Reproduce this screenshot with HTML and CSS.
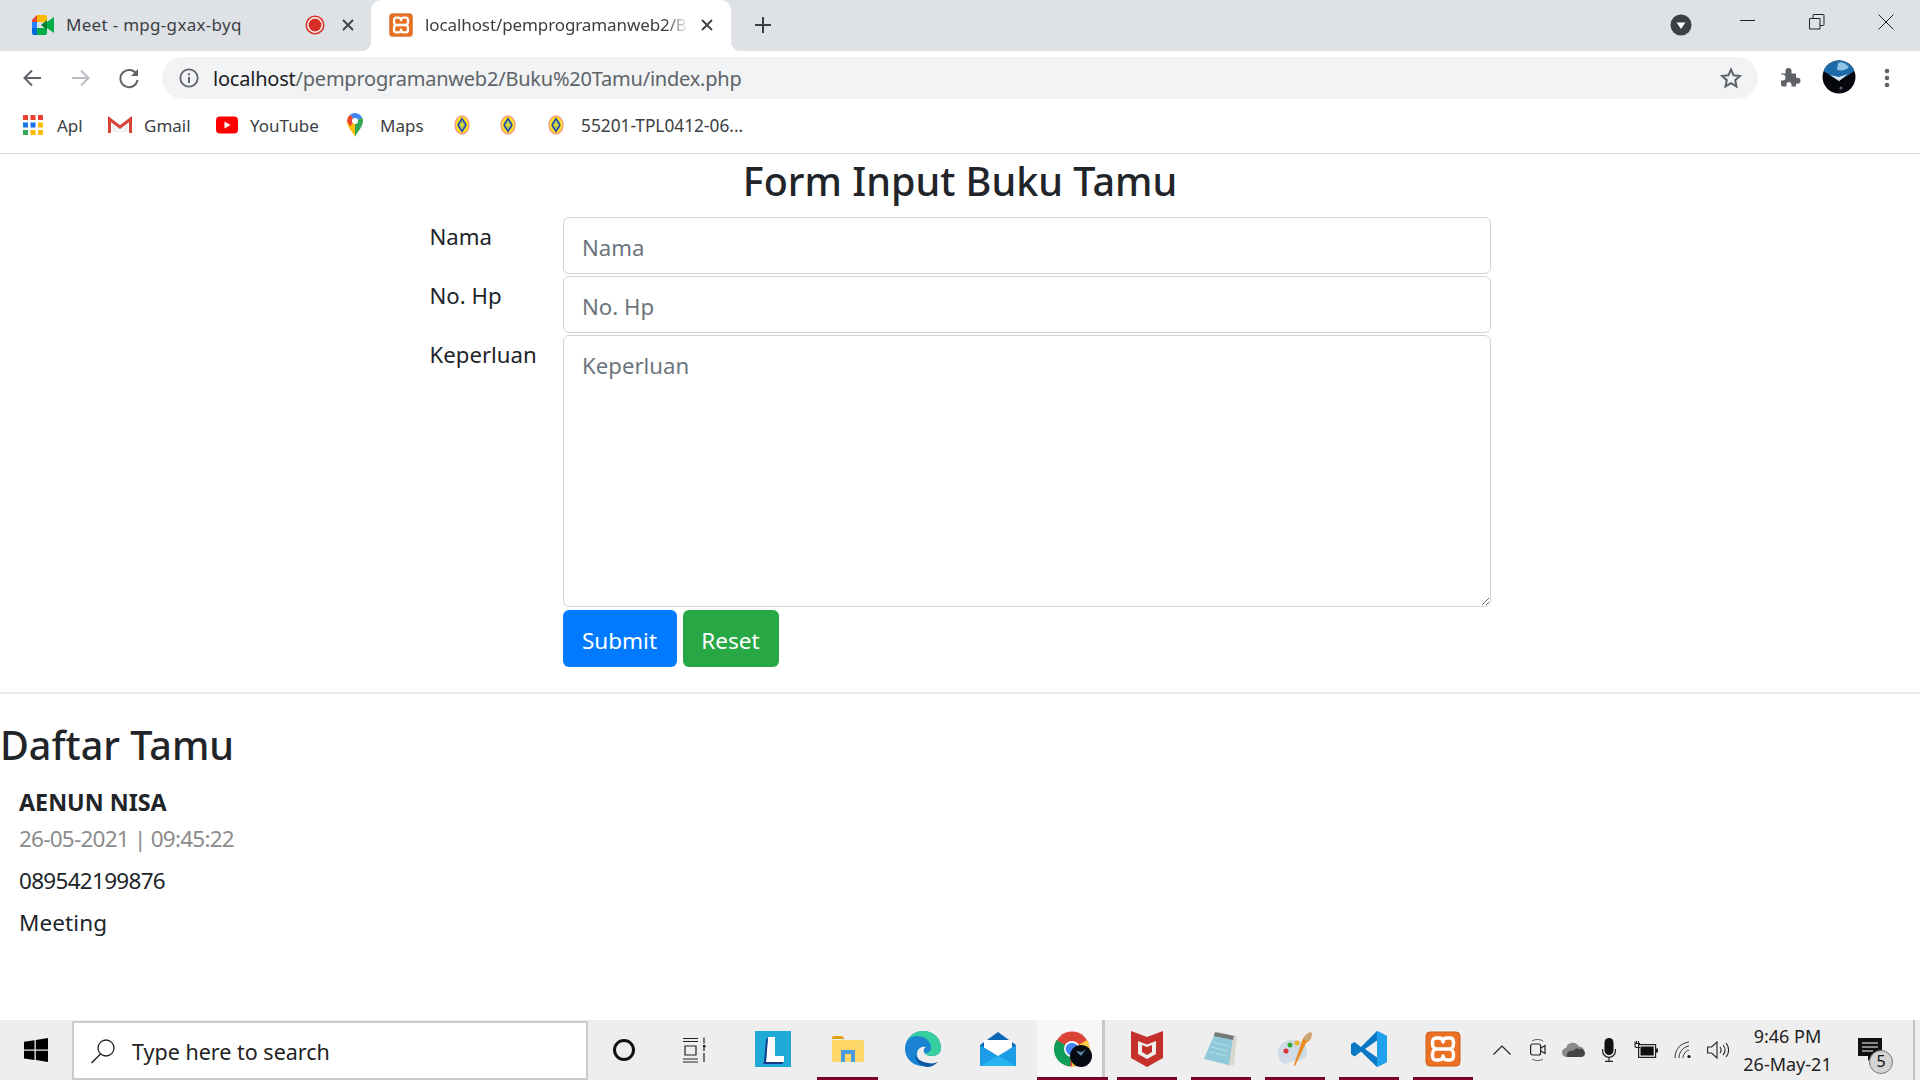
FILE: index.html
```html
<!DOCTYPE html>
<html lang="id">
<head>
<meta charset="utf-8">
<title>Form Input Buku Tamu</title>
<link rel="stylesheet" href="styles.css">
</head>
<body>
<svg class="defs" width="0" height="0" aria-hidden="true">
  <defs>
    <symbol id="xampp" viewBox="0 0 36 36">
      <rect x="1" y="1" width="34" height="34" rx="4" fill="#ea7024"/>
      <rect x="1" y="1" width="34" height="34" rx="4" fill="none" stroke="#c9601c" stroke-width="1"/>
      <path d="M18 11C18 8 16 7 14 7H11C8.500 7 7.500 9 7.500 11V13C7.500 16 9.500 18 12 18 9.500 18 7.500 20 7.500 23V25C7.500 27 8.500 29 11 29H14C16 29 18 28 18 25 18 28 20 29 22 29H25C27.500 29 28.500 27 28.500 25V23C28.500 20 26.500 18 24 18 26.500 18 28.500 16 28.500 13V11C28.500 9 27.500 7 25 7H22C20 7 18 8 18 11ZM12 18H24" fill="none" stroke="#fff" stroke-width="3.400" stroke-linejoin="round"/>
    </symbol>
    <symbol id="badge" viewBox="0 0 16 20">
      <ellipse cx="8" cy="10" rx="7.700" ry="9.700" fill="#f49a8a"/>
      <ellipse cx="8" cy="10" rx="6.300" ry="8.200" fill="#ffe21a"/>
      <ellipse cx="8" cy="10" rx="4.400" ry="5.800" fill="#9cc25a"/>
      <path d="M8 3.500l4 6.500-4 6.500L4 10z" fill="none" stroke="#1b2fc4" stroke-width="1.300"/>
      <circle cx="8" cy="10" r="1.400" fill="#ffe21a"/>
    </symbol>
  </defs>
</svg>

<header class="chrome">
  <div class="tabstrip">
    <div class="tab tab-meet">
      <svg class="fav-meet" viewBox="0 0 24 20" width="24" height="20">
        <path d="M1 5l5-5v7H1z" fill="#ea4335"/>
        <path d="M1 7h5v6H1z" fill="#2684fc"/>
        <path d="M1 13h5v7H3a2 2 0 0 1-2-2z" fill="#0066da"/>
        <path d="M6 0h8a2 2 0 0 1 2 2v5H6z" fill="#ffba00"/>
        <path d="M6 13h10v5a2 2 0 0 1-2 2H6z" fill="#00ac47"/>
        <path d="M10 10l6-5v10z" fill="#00832d"/>
        <path d="M16 7l7-5v16l-7-5z" fill="#00ac47"/>
      </svg>
      <span class="tab-title">Meet - mpg-gxax-byq</span>
      <svg class="rec" viewBox="0 0 20 20" width="20" height="20">
        <circle cx="10" cy="10" r="8.700" fill="#fff" stroke="#d93025" stroke-width="1.600"/>
        <circle cx="10" cy="10" r="6.500" fill="#d93025"/>
      </svg>
      <svg class="tab-x" viewBox="0 0 12 12" width="12" height="12"><path d="M1 1l10 10M11 1L1 11" stroke="#3c4043" stroke-width="1.800"/></svg>
    </div>
    <div class="tab tab-active">
      <svg class="fav-x" width="24" height="24"><use href="#xampp"/></svg>
      <span class="tab-title tab-clip">localhost/pemprogramanweb2/Buku%20Tamu/index.php</span>
      <svg class="tab-x" viewBox="0 0 12 12" width="12" height="12"><path d="M1 1l10 10M11 1L1 11" stroke="#3c4043" stroke-width="1.800"/></svg>
    </div>
    <svg class="newtab" viewBox="0 0 18 18" width="18" height="18"><path d="M9 1v16M1 9h16" stroke="#3c4043" stroke-width="2"/></svg>
    <div class="strip-fill"></div>
    <svg class="tabsearch" viewBox="0 0 22 22" width="22" height="22"><circle cx="11" cy="11" r="10.500" fill="#3c4043"/><path d="M6.500 8.500h9L11 15z" fill="#fff"/></svg>
    <div class="winctl">
      <svg viewBox="0 0 16 16" width="16" height="16"><path d="M0 6.500h15" stroke="#222" stroke-width="1"/></svg>
      <svg viewBox="0 0 16 16" width="16" height="16"><path d="M.5 4.500h10.500v10.500H.5zM4 4.500V1.200a.7.7 0 0 1 .7-.7h9.600a.7.7 0 0 1 .7.7v9.600a.7.7 0 0 1-.7.7H11" fill="none" stroke="#222" stroke-width="1"/></svg>
      <svg viewBox="0 0 16 16" width="16" height="16"><path d="M.5.500l15 15M15.500.500l-15 15" stroke="#222" stroke-width="1"/></svg>
    </div>
  </div>

  <div class="toolbar">
    <svg class="nav nav-back" viewBox="0 0 20 20" width="20" height="20"><path d="M19 10H3M10 2.500L2.500 10l7.500 7.500" fill="none" stroke="#5f6368" stroke-width="2"/></svg>
    <svg class="nav nav-fwd" viewBox="0 0 20 20" width="20" height="20"><path d="M1 10h16M10 2.500l7.500 7.500-7.500 7.500" fill="none" stroke="#b9bcc0" stroke-width="2"/></svg>
    <svg class="nav nav-reload" viewBox="0 0 22 22" width="22" height="22"><path d="M18.600 7.500A8.600 8.600 0 1 0 19.500 13" fill="none" stroke="#5f6368" stroke-width="2"/><path d="M20 2v7h-7z" fill="#5f6368"/></svg>
    <div class="omnibox">
      <svg class="info" viewBox="0 0 20 20" width="20" height="20"><circle cx="10" cy="10" r="8.700" fill="none" stroke="#5f6368" stroke-width="1.800"/><path d="M9 9h2v6H9zM9 5.200h2v2H9z" fill="#5f6368"/></svg>
      <span class="url"><span class="url-host">localhost</span>/pemprogramanweb2/Buku%20Tamu/index.php</span>
      <svg class="star" viewBox="0 0 22 22" width="22" height="22"><path d="M11 2.500l2.600 5.800 6.300.7-4.700 4.200 1.300 6.200-5.500-3.200-5.500 3.200 1.300-6.200L2.100 9l6.300-.7z" fill="none" stroke="#5f6368" stroke-width="2"/></svg>
    </div>
    <svg class="puzzle" viewBox="0 0 22 22" width="22" height="22"><path d="M1 8h4.500V5.500a3 3 0 0 1 6 0V8H16v4.300h1.500a3 3 0 0 1 0 6H16V21h-4.500v-2a2.500 2.500 0 0 0-5 0v2H3a2 2 0 0 1-2-2v-4h1.500a3 3 0 0 0 0-6H1z" fill="#5f6368" transform="translate(0 -1.500)"/></svg>
    <svg class="avatar" viewBox="0 0 34 34" width="34" height="34">
      <defs><clipPath id="avc"><circle cx="17" cy="17" r="16.500"/></clipPath></defs>
      <g clip-path="url(#avc)">
        <rect width="34" height="34" fill="#05070c"/>
        <path d="M0 0h34v10L17 21 0 10z" fill="#1c6aa8"/>
        <path d="M16 3c5-2 8 1 11 4-3 3-7 4-12 3z" fill="#8fc3e6"/>
        <path d="M17 21l-9-6 9 2 9-3z" fill="#d5e6f2"/>
        <circle cx="19" cy="28" r="1.500" fill="#667"/>
      </g>
    </svg>
    <svg class="menu" viewBox="0 0 6 20" width="6" height="20"><circle cx="3" cy="3" r="2.300" fill="#5f6368"/><circle cx="3" cy="10" r="2.300" fill="#5f6368"/><circle cx="3" cy="17" r="2.300" fill="#5f6368"/></svg>
  </div>

  <nav class="bookmarks">
    <a class="bm bm-apl">
      <svg viewBox="0 0 20 20" width="20" height="20">
        <g fill="#ea4335"><rect x="0" y="0" width="5" height="5"/><rect x="7.500" y="0" width="5" height="5"/><rect x="15" y="0" width="5" height="5"/></g>
        <g fill="#1a73e8"><rect x="0" y="7.500" width="5" height="5"/><rect x="7.500" y="7.500" width="5" height="5"/></g>
        <rect x="15" y="7.500" width="5" height="5" fill="#fbbc04"/>
        <rect x="0" y="15" width="5" height="5" fill="#34a853"/>
        <g fill="#fbbc04"><rect x="7.500" y="15" width="5" height="5"/><rect x="15" y="15" width="5" height="5"/></g>
      </svg>
      <span>Apl</span>
    </a>
    <a class="bm bm-gmail">
      <svg viewBox="0 0 24 18" width="24" height="18"><path d="M4 16V6l8 6 8-6v10" fill="#f1f1f1"/><path d="M1.500 17V3l10.500 8 10.500-8v14" fill="none" stroke="#d8433a" stroke-width="3"/></svg>
      <span>Gmail</span>
    </a>
    <a class="bm bm-yt">
      <svg viewBox="0 0 22 18" width="22" height="18"><rect width="22" height="17" y=".5" rx="4" fill="#ff0000"/><path d="M8.500 5.500v7l6-3.500z" fill="#fff"/></svg>
      <span>YouTube</span>
    </a>
    <a class="bm bm-maps">
      <svg viewBox="0 0 16 24" width="16" height="24">
        <path d="M8 24C6 19 0 14 0 8a8 8 0 0 1 3-6.200l5 6.200z" fill="#fbbc04"/>
        <path d="M8 24c2-5 8-10 8-16a8 8 0 0 0-.8-3.500L8 8z" fill="#34a853"/>
        <path d="M3 1.800A8 8 0 0 1 15.200 4.500L8 8z" fill="#4285f4"/>
        <path d="M0 8a8 8 0 0 1 3-6.200L8 8 3 13z" fill="#ea4335"/>
        <circle cx="8" cy="8" r="3" fill="#fff"/>
      </svg>
      <span>Maps</span>
    </a>
    <svg class="bm-badge badge-1" width="16" height="20"><use href="#badge"/></svg>
    <svg class="bm-badge badge-2" width="16" height="20"><use href="#badge"/></svg>
    <a class="bm bm-last">
      <svg width="16" height="20"><use href="#badge"/></svg>
      <span>55201-TPL0412-06...</span>
    </a>
  </nav>
</header>

<main class="page">
  <h3 class="form-title">Form Input Buku Tamu</h3>
  <form class="guest-form">
    <label class="field-label" for="nama">Nama</label>
    <input class="field" id="nama" type="text" placeholder="Nama">
    <label class="field-label" for="hp">No. Hp</label>
    <input class="field" id="hp" type="text" placeholder="No. Hp">
    <label class="field-label" for="perlu">Keperluan</label>
    <textarea class="field field-area" id="perlu" placeholder="Keperluan"></textarea>
    <div class="actions">
      <button class="btn btn-blue" type="button">Submit</button>
      <button class="btn btn-green" type="button">Reset</button>
    </div>
  </form>
  <hr class="rule">
  <h3 class="list-title">Daftar Tamu</h3>
  <article class="guest">
    <h5 class="guest-name">AENUN NISA</h5>
    <p class="guest-time">26-05-2021 | 09:45:22</p>
    <p class="guest-line guest-phone">089542199876</p>
    <p class="guest-line">Meeting</p>
  </article>
</main>

<footer class="taskbar">
  <div class="slot slot-start">
    <svg viewBox="0 0 24 24" width="24" height="24"><path d="M0 3.700l10.500-1.500v9.300H0zM11.800 2l12.200-2v11.500H11.800zM0 12.800h10.500v9.300L0 20.500zM11.800 12.800H24V24l-12.200-2z" fill="#000"/></svg>
  </div>
  <div class="search">
    <svg viewBox="0 0 26 26" width="26" height="26"><circle cx="16" cy="10" r="8" fill="none" stroke="#222" stroke-width="1.300"/><path d="M10.500 16L1.500 25" stroke="#222" stroke-width="1.400"/></svg>
    <span class="search-text">Type here to search</span>
  </div>
  <div class="slot slot-cortana">
    <svg viewBox="0 0 24 24" width="24" height="24"><circle cx="12" cy="12" r="9.500" fill="none" stroke="#111" stroke-width="3"/></svg>
  </div>
  <div class="slot slot-task">
    <svg viewBox="0 0 26 26" width="26" height="26"><path d="M1 1.500h15M1 4.500h15M3 9h11v9H3zM1 22h15M1 25h15M22 .5v6M22 10.500v3.500M22 16v9" fill="none" stroke="#222" stroke-width="1.200"/><rect x="21" y="8" width="2.500" height="2.500" fill="#222"/></svg>
  </div>
  <div class="pinned pinned-a">
    <div class="slot-app">
      <svg viewBox="0 0 36 36" width="36" height="36"><rect width="36" height="36" fill="#1fa9d6"/><path d="M13 6h7v19h9v6H11z" fill="#fff"/><path d="M11 9l2-3-2 25h-2z M9 31h20l-2 2H8z" fill="#153a86"/></svg>
    </div>
    <div class="slot-app is-open">
      <svg viewBox="0 0 32 26" width="32" height="26"><path d="M0 2a2 2 0 0 1 2-2h8l3 3h-13z" fill="#e0a30f"/><path d="M0 4h30a2 2 0 0 1 2 2v18a2 2 0 0 1-2 2H2a2 2 0 0 1-2-2z" fill="#fcd768"/><path d="M9 14h14v12h-4v-8h-6v8H9z" fill="#4a9ce0"/></svg>
    </div>
    <div class="slot-app">
      <svg viewBox="0 0 36 36" width="36" height="36"><path d="M18 0c10 0 18 7 18 17 0 5-4 8-9 8-3 0-7-1-8-4-1-2 0-4 2-5-5-1-9 2-9 7 0 6 5 11 12 12C10 37 0 29 0 18 0 8 8 0 18 0z" fill="#1b84d2"/><path d="M18 0c10 0 18 7 18 17 0 5-4 8-9 8-3 0-6-1-7-3 5 0 6-3 6-5 0-7-6-12-14-12-4 0-8 2-10 6C5 4 11 0 18 0z" fill="#36cfa0"/><path d="M10 24c0 6 5 11 12 12 4 0 8-2 11-5-3 1-6 2-10 1-7-1-10-4-13-8z" fill="#0c59a4"/></svg>
    </div>
    <div class="slot-app">
      <svg viewBox="0 0 36 34" width="36" height="34"><path d="M0 13L18 0l18 13v19a2 2 0 0 1-2 2H2a2 2 0 0 1-2-2z" fill="#0c65b5"/><path d="M4 8h28v10L18 26 4 18z" fill="#fff"/><path d="M0 13l18 11 18-11v21H0z" fill="#1c9be6"/><path d="M0 34l18-10 18 10z" fill="#28b4f0"/></svg>
    </div>
  </div>
  <div class="slot-app slot-chrome is-open">
    <svg viewBox="0 0 38 36" width="38" height="36">
      <circle cx="18" cy="18" r="17.500" fill="#db4437"/>
      <path d="M18 18L33 9a17.500 17.500 0 0 1-15 26.500z" fill="#ffcd40"/>
      <path d="M18 18l-2 17.500A17.500 17.500 0 0 1 2.500 9z" fill="#0f9d58"/>
      <circle cx="18" cy="18" r="8" fill="#fff"/>
      <circle cx="18" cy="18" r="6.300" fill="#4285f4"/>
      <circle cx="27" cy="25" r="11" fill="#060a12"/>
      <path d="M22 20l5 5 5-7-4 3z" fill="#5d86a8"/>
    </svg>
  </div>
  <div class="pinned pinned-b">
    <div class="slot-app is-open">
      <svg viewBox="0 0 32 36" width="32" height="36"><path d="M0 0l16 6 16-6v27L16 36 0 27z" fill="#c5302b"/><path d="M7 10l9 3.500L25 10v13l-9 5-9-5z" fill="#eee"/><path d="M11 14l5 2 5-2v7l-5 3-5-3z" fill="#c5302b"/></svg>
    </div>
    <div class="slot-app is-open">
      <svg viewBox="0 0 34 36" width="34" height="36"><path d="M15 1l18 4-3 29-8 1z" fill="#d8d8d0"/><path d="M11 2l18 4-4 28-25-6z" fill="#8fc8d8"/><path d="M11 1l19 4-1 4L10 5z" fill="#777"/><path d="M9 11l16 4M7 16l17 4M5 21l18 4" stroke="#b5dde8" stroke-width="1"/></svg>
    </div>
    <div class="slot-app is-open">
      <svg viewBox="0 0 36 36" width="36" height="36"><path d="M1 22C1 13 9 8 18 9c8 1 13 6 12 13-1 6-8 9-14 8-4 0-4 3-8 3-4-1-7-5-7-11z" fill="#cfdbe6"/><circle cx="9" cy="20" r="2.500" fill="#d33"/><circle cx="13" cy="14" r="2.500" fill="#3a3"/><circle cx="20" cy="12" r="2.500" fill="#e9b41f"/><path d="M34 1c2 5-1 9-5 11L18 35l-1-1 8-24c1-4 5-8 9-9z" fill="#e88a1e"/><path d="M34 1c2 4-1 8-4 9l-4-2c1-3 5-6 8-7z" fill="#c9a878"/></svg>
    </div>
    <div class="slot-app is-open">
      <svg viewBox="0 0 36 36" width="36" height="36"><path d="M26 0l10 5v26l-10 5-16-15.500-6.500 5L0 23V13l3.500-2 6.500 5z" fill="#0b78c5"/><path d="M26 0l10 5v26l-10 5z" fill="#22a2ee"/><path d="M26 9.500L14 18l12 8.500z" fill="#eeeeee"/></svg>
    </div>
    <div class="slot-app is-open">
      <svg width="36" height="36"><use href="#xampp"/></svg>
    </div>
  </div>
  <div class="tray">
    <div class="tray-item w32"><svg viewBox="0 0 18 10" width="18" height="10"><path d="M.5 9.500L9 1l8.500 8.500" fill="none" stroke="#222" stroke-width="1.200"/></svg></div>
    <div class="tray-item w40"><svg viewBox="0 0 16 24" width="16" height="24"><rect x=".6" y="6" width="10" height="11" rx="2" fill="none" stroke="#222" stroke-width="1.200"/><path d="M11 10l4-2.500v8L11 13" fill="none" stroke="#222" stroke-width="1.200"/><path d="M2 3c3-2 8-2 11 0M2 21c3 2 8 2 11 0" fill="none" stroke="#555" stroke-width="1"/></svg></div>
    <div class="tray-item w32"><svg viewBox="0 0 24 16" width="24" height="16"><path d="M5 15a4.500 4.500 0 0 1-1-9 7 7 0 0 1 13-1.500A5.500 5.500 0 0 1 19 15z" fill="#8a8a8a"/><path d="M5 15h14a4 4 0 0 0 4-4 4.500 4.500 0 0 0-6-4c-3-1-5 0-6 2-4-1-7 2-6 6z" fill="#444"/></svg></div>
    <div class="tray-item w38"><svg viewBox="0 0 14 24" width="14" height="24"><rect x="2.500" width="9" height="17" rx="4.500" fill="#111"/><path d="M.6 11v2a6.400 6.400 0 0 0 12.800 0v-2M7 19.500V23M3 23.400h8" fill="none" stroke="#222" stroke-width="1.200"/></svg></div>
    <div class="tray-item w36"><svg class="battery" viewBox="0 0 24 17" width="24" height="17"><path d="M1 .5v4a2 2 0 0 0 2 2h3M2.500 0v3M4.500 0v3M.5 2.500h5.500" fill="none" stroke="#222" stroke-width="1.100"/><rect x="4.600" y="3.600" width="17" height="12.800" fill="none" stroke="#222" stroke-width="1.200"/><rect x="6.500" y="5.500" width="13.200" height="9" fill="#111"/><rect x="22" y="7.500" width="2" height="4" fill="#222"/></svg></div>
    <div class="tray-item w38"><svg viewBox="0 0 18 18" width="18" height="18"><path d="M1 17C1 8 7 2 15 1M5 17C5 11 9 6 15 5M9 17c0-3 2-7 6-8" fill="none" stroke="#333" stroke-width="1"/><circle cx="15" cy="15.500" r="1.600" fill="#111"/></svg></div>
    <div class="tray-item w32"><svg viewBox="0 0 22 18" width="22" height="18"><path d="M.6 6h4L10 1v16l-5.400-5h-4zM13 6c1.500 2 1.500 4 0 6M16 4c2.500 3 2.500 7 0 10M19 2c3.500 4 3.500 10 0 14" fill="none" stroke="#222" stroke-width="1.100"/></svg></div>
    <div class="clock"><span>9:46 PM</span><span>26-May-21</span></div>
    <div class="notif">
      <svg viewBox="0 0 24 24" width="24" height="24"><path d="M0 0h24v18H15l-5 5v-5H0z" fill="#111"/><path d="M4 5h16M4 9h16M4 13h11" stroke="#fff" stroke-width="1.200"/></svg>
      <span class="notif-count">5</span>
    </div>
  </div>
  <div class="show-desktop"></div>
</footer>
</body>
</html>
```
FILE: styles.css
```css
* { box-sizing: border-box; }
html, body { margin: 0; height: 100%; }
body {
  width: 1920px;
  height: 1080px;
  overflow: hidden;
  display: flex;
  flex-direction: column;
  font-family: "Noto Sans", "Open Sans", sans-serif;
  color: #212529;
  background: #fff;
}
.defs { position: absolute; }
svg { display: block; flex: none; }

/* browser chrome */
.chrome { flex: none; height: 154px; border-bottom: 1px solid #d9d9d9; display: flex; flex-direction: column; }
.tabstrip { height: 51px; background: #dee1e6; display: flex; align-items: center; }
.tab { height: 51px; display: flex; align-items: center; position: relative; padding-bottom: 2px; }
.tab-title { font-size: 17px; color: #3c4043; white-space: nowrap; letter-spacing: -0.1px; flex: none; }
.tab-meet { width: 371px; padding-left: 31px; }
.fav-meet { margin-right: 11px; }
.tab-meet .tab-title { width: 239px; letter-spacing: 0.3px; }
.rec { margin-right: 17px; }
.tab-active {
  width: 360px;
  padding-left: 18px;
  background: #fff;
  border-radius: 10px 10px 0 0;
}
.tab-active::before, .tab-active::after {
  content: "";
  position: absolute;
  bottom: 0;
  width: 10px;
  height: 10px;
}
.tab-active::before { left: -10px; background: radial-gradient(circle at 0 0, transparent 10px, #fff 10.500px); }
.tab-active::after { right: -10px; background: radial-gradient(circle at 100% 0, transparent 10px, #fff 10.500px); }
.fav-x { margin-right: 12px; }
.tab-clip {
  width: 263px;
  overflow: hidden;
  -webkit-mask-image: linear-gradient(to right, #000 92%, transparent);
  mask-image: linear-gradient(to right, #000 92%, transparent);
  margin-right: 13px;
}
.newtab { margin-left: 23px; margin-bottom: 2px; }
.strip-fill { flex: 1; }
.tabsearch { margin-right: 48px; margin-bottom: 2px; margin-left: 1px; }
.winctl { display: flex; gap: 53px; margin-right: 26px; align-self: flex-start; padding-top: 14px; }

.toolbar { height: 56px; background: #fff; display: flex; align-items: center; padding-bottom: 2px; }
.nav-back { margin-left: 22px; }
.nav-fwd { margin-left: 29px; }
.nav-reload { margin-left: 27px; }
.omnibox {
  width: 1596px;
  height: 42px;
  margin-left: 22px;
  border-radius: 21px;
  background: #f1f3f4;
  display: flex;
  align-items: center;
  padding-left: 17px;
}
.info { margin-right: 14px; }
.url { flex: 1; font-size: 20px; color: #5f6368; letter-spacing: -0.22px; white-space: nowrap; }
.url-host { color: #202124; }
.star { margin-right: 16px; }
.puzzle { margin-left: 22px; }
.avatar { margin-left: 20px; margin-top: -2px; }
.menu { margin-left: 28px; }

.bookmarks { height: 46px; padding: 0 0 10px 23px; display: flex; align-items: center; background: #fff; }
.bm { display: flex; align-items: center; font-size: 17px; color: #3c4043; white-space: nowrap; flex: none; }
.bm-apl { gap: 14px; width: 85px; }
.bm-gmail { gap: 12px; width: 108px; }
.bm-yt { gap: 12px; width: 131px; }
.bm-maps { gap: 17px; width: 107px; }
.bm-badge.badge-1 { margin-right: 30px; }
.bm-badge.badge-2 { margin-right: 32px; }
.bm-last { gap: 17px; font-size: 17.300px; }

/* page */
.page { flex: 1; min-height: 0; }
.form-title {
  margin: 1px 0 10px;
  text-align: center;
  font-size: 39.500px;
  line-height: 52px;
  font-weight: 500;
}
.guest-form {
  width: 1061px;
  margin: 0 auto;
  display: grid;
  grid-template-columns: 133px 928px;
  row-gap: 2px;
}
.field-label { font-size: 22.200px; line-height: 36px; padding-top: 2px; }
.field {
  display: block;
  width: 100%;
  height: 57px;
  padding: 10px 18px 6px 18.500px;
  border: 1px solid #ced4da;
  border-radius: 6px;
  background: #fff;
  color: #495057;
  font-family: inherit;
  font-size: 22.200px;
  line-height: 36px;
  outline: none;
}
.field::placeholder { color: #6c757d; opacity: 1; }
.field-area { height: 272px; padding-top: 12px; resize: vertical; }
.actions { grid-column: 2; display: flex; gap: 6px; margin-top: 1px; }
.btn {
  height: 57px;
  border: 1px solid transparent;
  border-radius: 6px;
  padding: 3px 0 0;
  font-family: inherit;
  font-size: 22.500px;
  color: #fff;
}
.btn-blue { width: 114px; background: #007bff; }
.btn-green { width: 96px; background: #28a745; }
.rule { height: 0; margin: 25px 0 0; border: 0; border-top: 2px solid #e9ecef; }
.list-title {
  margin: 25px 0 0;
  font-size: 39.500px;
  line-height: 52px;
  font-weight: 500;
}
.guest { padding: 0 19px; }
.guest-name { margin: 15px 0 0; font-size: 23.300px; line-height: 32px; font-weight: 700; }
.guest-time { margin: 3px 0 0; font-size: 22.500px; line-height: 36px; color: #8c8c8c; letter-spacing: -0.76px; }
.guest-line { margin: 6px 0 0; font-size: 22.500px; line-height: 36px; color: #212529; letter-spacing: 0.1px; }
.guest-phone { margin-top: 6px; letter-spacing: -0.7px; }

/* taskbar */
.taskbar { flex: none; height: 60px; background: #eeeeee; display: flex; align-items: stretch; }
.slot { display: flex; align-items: center; justify-content: center; }
.slot-start { width: 72px; }
.search {
  width: 516px;
  background: #fff;
  border: 2px solid #cccccc;
  display: flex;
  align-items: center;
  padding-left: 16px;
  gap: 16px;
  font-size: 21.500px;
  color: #222;
  margin-top: 1px;
}
.search-text { padding-top: 1px; }
.slot-cortana { width: 71px; }
.slot-task { width: 72px; }
.pinned { display: flex; }
.pinned-a { margin-left: 11px; gap: 14px; }
.pinned-b { margin-left: 9px; gap: 14px; }
.slot-app {
  width: 61px;
  display: flex;
  align-items: center;
  justify-content: center;
  border-bottom: 3px solid transparent;
}
.pinned-b .slot-app { width: 60px; }
.is-open { border-bottom-color: #7a0030; }
.slot-chrome {
  width: 71px;
  margin-left: 9px;
  background: linear-gradient(to right, #f7f7f7 65px, #c9c9c9 65px, #c9c9c9 68px, #eeeeee 68px);
}
.tray { display: flex; align-items: stretch; margin-left: 13px; }
.tray-item { display: flex; align-items: center; justify-content: center; }
.battery { margin-bottom: 2px; }
.w32 { width: 32px; }
.w36 { width: 36px; }
.w38 { width: 38px; }
.w40 { width: 40px; }
.clock {
  width: 106px;
  display: flex;
  flex-direction: column;
  align-items: center;
  justify-content: center;
  gap: 3px;
  font-size: 18px;
  line-height: 25px;
  color: #222;
  padding-left: 1px;
}
.notif { width: 60px; position: relative; display: flex; justify-content: center; padding-top: 18px; }
.notif-count {
  position: absolute;
  left: 29px;
  top: 30px;
  width: 24px;
  height: 24px;
  border-radius: 50%;
  background: #d4d4d4;
  border: 1px solid #777;
  font-size: 16px;
  line-height: 21px;
  text-align: center;
  color: #111;
}
.show-desktop { width: 2px; margin-left: auto; margin-right: 5px; background: #c2c2c2; }
```
